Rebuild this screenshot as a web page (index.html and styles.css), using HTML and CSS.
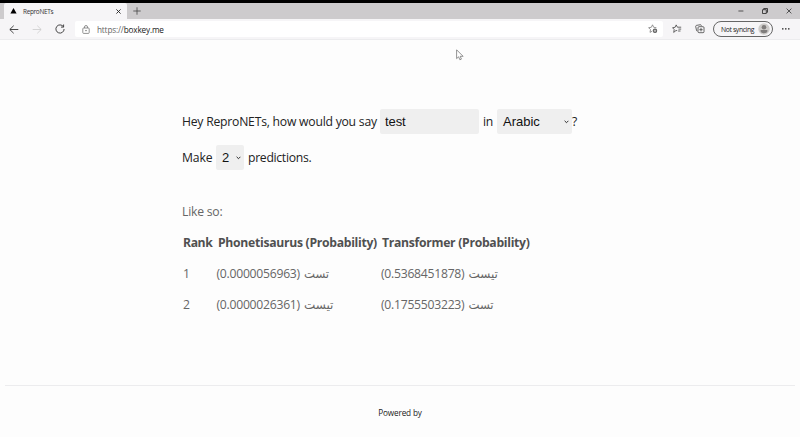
FILE: index.html
```html
<!DOCTYPE html>
<html lang="en">
<head>
<meta charset="utf-8">
<title>ReproNETs</title>
<link rel="stylesheet" href="styles.css">
</head>
<body>
<header class="browser">
  <div class="tabs">
    <div class="tab">
      <svg class="favicon" width="7" height="6" viewBox="0 0 7 6"><path d="M3.5 0 6.6 5.5H.4Z" fill="#000"/></svg>
      <span class="tab-title">ReproNETs</span>
      <svg class="tab-close" width="5" height="5" viewBox="0 0 5 5"><path d="m.4.4 4.2 4.2m0-4.2L.4 4.6" stroke="#222" stroke-width=".9"/></svg>
    </div>
    <svg class="new-tab" width="8" height="8" viewBox="0 0 8 8"><path d="M4 .3v7.4M.3 4h7.4" stroke="#444" stroke-width=".8"/></svg>
    <div class="window-controls">
      <svg width="6" height="6" viewBox="0 0 6 6"><path d="M.4 3h5" stroke="#333" stroke-width=".8"/></svg>
      <svg width="6" height="6" viewBox="0 0 6 6" fill="none" stroke="#222" stroke-width=".8"><path d="M.5 1.7h3.8v3.8H.5zM1.7 1.5V.5h3.8v3.8H4.5"/></svg>
      <svg width="6" height="6" viewBox="0 0 6 6"><path d="m.6.6 4.8 4.8m0-4.8L.6 5.4" stroke="#333" stroke-width=".8"/></svg>
    </div>
  </div>
  <nav class="toolbar">
    <svg class="back" width="10" height="9" viewBox="0 0 10 9" fill="none" stroke="#333" stroke-width=".9"><path d="M9.3 4.5H1M4.7.7.8 4.5l3.9 3.8"/></svg>
    <svg class="forward" width="10" height="9" viewBox="0 0 10 9" fill="none" stroke="#ccc" stroke-width=".8"><path d="M.7 4.5H9M5.3.7l3.9 3.8-3.9 3.8"/></svg>
    <svg class="reload" width="10" height="10" viewBox="0 0 10 10" fill="none" stroke="#333" stroke-width=".9"><path d="M8.4 2.7A4.1 4.1 0 1 0 9.1 5M8.6.5v2.6H6"/></svg>
    <div class="address">
      <svg class="lock" width="8" height="9" viewBox="0 0 8 9" fill="none" stroke="#777" stroke-width=".8"><rect x=".8" y="3" width="6.4" height="5.4" rx=".8"/><path d="M2.5 3V2a1.5 1.5 0 0 1 3 0v1"/><circle cx="4" cy="5.7" r=".4" fill="#777"/></svg>
      <span class="url"><span class="scheme">https://</span>boxkey.me</span>
      <svg class="star-add" width="10" height="10" viewBox="0 0 10 10" fill="none" stroke="#777" stroke-width=".75"><path d="M4.3 7.1 2 8.4l.5-2.8L.6 3.7l2.7-.4L4.5.8l1.2 2.5 2.7.4"/><circle cx="7" cy="6.8" r="2.2" fill="#555" stroke="none"/><path d="M7 5.5v2.6M5.7 6.8h2.6" stroke="#fff" stroke-width=".6"/></svg>
    </div>
    <svg class="favorites" width="10" height="10" viewBox="0 0 10 10" fill="none" stroke="#444" stroke-width=".8"><path d="M5.2 6.6 4 6.5 1.7 8.4l.5-2.8L.6 3.7l2.5-.4L4.2.9l1.2 2.3h3.8M6.4 5.1h2.8M6.1 7h2.4"/></svg>
    <svg class="collections" width="10" height="10" viewBox="0 0 10 10" fill="none" stroke="#444" stroke-width=".8"><path d="M2.4 7 1.6 6.7.7 2.5Q.7 1.6 1.5 1.4L5.4.7q.8 0 1 1.1"/><rect x="3" y="2.7" width="6" height="6" rx="1"/><path d="M6 4v3.4M4.3 5.7h3.4"/></svg>
    <div class="profile"><span>Not syncing</span><svg class="avatar" width="12" height="12" viewBox="0 0 12 12"><circle cx="6" cy="6" r="5.7" fill="#ceccca"/><circle cx="6" cy="4.2" r="2.3" fill="#807d7c"/><path d="M2.4 8q0-.9.9-.9h5.4q.9 0 .9.9Q9 10.3 6 10.3T2.4 8" fill="#807d7c"/></svg></div>
    <svg class="more" width="8" height="2" viewBox="0 0 8 2"><path d="M0 .3h1.5v1.2H0zm3 0h1.5v1.2H3zm3 0h1.5v1.2H6z" fill="#222"/></svg>
  </nav>
</header>
<main>
  <div class="line query"><span class="ask">Hey ReproNETs, how would you say</span><input class="word" type="text" value="test" aria-label="Word"><span class="in">in</span><div class="select language"><span>Arabic</span><svg width="5" height="4" viewBox="0 0 5 4"><path d="m.6.8 1.9 1.9L4.4.8" fill="none" stroke="#222" stroke-width=".95"/></svg></div><span>?</span></div>
  <div class="line count"><span class="make">Make</span><div class="select number"><span>2</span><svg width="5" height="4" viewBox="0 0 5 4"><path d="m.6.8 1.9 1.9L4.4.8" fill="none" stroke="#222" stroke-width=".95"/></svg></div><span class="predictions">predictions.</span></div>
  <section class="results">
    <p class="intro">Like so:</p>
    <div class="row head"><span>Rank</span><span class="h1">Phonetisaurus (Probability)</span><span class="h2">Transformer (Probability)</span></div>
    <div class="row"><span>1</span><span class="value"><span>(0.0000056963)</span><bdi lang="ar">تست</bdi></span><span class="value"><span>(0.5368451878)</span><bdi lang="ar" class="long">تيست</bdi></span></div>
    <div class="row"><span>2</span><span class="value"><span>(0.0000026361)</span><bdi lang="ar" class="long">تيست</bdi></span><span class="value"><span>(0.1755503223)</span><bdi lang="ar">تست</bdi></span></div>
  </section>
</main>
<footer>Powered by</footer>
<svg class="cursor" width="8" height="12" viewBox="0 0 8 12"><path d="M.6.8v8.8l2-1.8 1.3 3 1.5-.7-1.2-2.8h2.9Z" fill="#fff" stroke="#666" stroke-width=".7"/></svg>
</body>
</html>
```

FILE: styles.css
```css
* { box-sizing: border-box; }
body {
  margin: 0;
  width: 800px;
  height: 437px;
  overflow: hidden;
  display: flex;
  flex-direction: column;
  background: #fdfdfd;
  color: #222;
  font: 12.2px/16px "Open Sans", "Noto Sans", sans-serif;
  white-space: nowrap;
}
svg { display: block; flex: none; }
.browser { border-top: 3px solid #000; height: 40px; flex: none; }
.tabs { height: 16px; background: #cdcbcd; display: flex; align-items: center; padding-left: 4px; }
.tab { width: 123px; height: 16px; background: #f6f5f7; display: flex; align-items: center; padding: 0 6px; border-radius: 2px 2px 0 0; }
.tab-title { font-size: 6.4px; line-height: 10px; margin: 1px 0 0 6px; letter-spacing: -.3px; color: #333; }
.tab-close { margin: 1px 0 0 auto; }
.new-tab { margin-left: 6px; }
.window-controls { margin-left: auto; display: flex; gap: 18px; padding-right: 8px; }
.toolbar { height: 21px; background: #f6f5f7; border-bottom: 1px solid #ececee; display: flex; align-items: center; padding: 0 10px 0 9px; }
.forward { margin-left: 13px; }
.reload { margin-left: 13px; }
.address { width: 588px; height: 16px; background: #fff; border-radius: 2px; margin-left: 10px; padding: 0 5px 0 7px; display: flex; align-items: center; }
.url { margin: 1px 0 0 7px; font-size: 8.2px; line-height: 12px; letter-spacing: -.16px; }
.scheme { color: #666; }
.star-add { margin-left: auto; }
.favorites { margin-left: 9px; }
.collections { margin-left: 13px; }
.profile { width: 60px; height: 16px; margin-left: 8px; border: 1px solid #666; border-radius: 8px; display: flex; align-items: center; justify-content: space-between; padding: 0 2px 0 7px; font-size: 6.8px; line-height: 10px; letter-spacing: -.36px; }
.profile span { padding-top: 1px; }
.more { margin-left: auto; }

main { padding: 69px 0 0 182px; height: 345px; flex: none; letter-spacing: -.23px; }
.line { display: flex; align-items: center; height: 25px; }
.count { margin-top: 11px; }
.ask { width: 198px; }
.word, .select { background: #efefef; border: 0; border-radius: 2px; height: 25px; color: #111; font: 13px/25px "Liberation Sans", Arial, sans-serif; letter-spacing: -.1px; }
.word { width: 99px; padding: 0 5px; }
.in { width: 18px; padding-left: 4px; }
.select { display: flex; align-items: center; justify-content: space-between; }
.language { width: 75px; padding: 0 3px 0 6px; letter-spacing: 0; }
.make { width: 34px; letter-spacing: -.1px; }
.number { width: 28px; padding: 0 3px 0 6px; }
.predictions { margin-left: 4px; letter-spacing: -.3px; }

.results { color: #666; margin-top: 34px; }
.intro { margin: 0; }
.row { display: grid; grid-template-columns: 34px 164px 160px; height: 16px; margin-top: 15px; padding-left: 1px; }
.head { font-weight: 700; color: #505050; letter-spacing: -.29px; }
.head > :first-child { letter-spacing: -.4px; }
.h1, .h2 { padding-left: 1px; }
.value { display: flex; letter-spacing: -.26px; }
.value:nth-child(2) { margin-left: -.5px; }
bdi { margin-left: 4px; font: 11.7px/17px "DejaVu Sans", sans-serif; letter-spacing: 0; }
.long { font-size: 12px; }

footer { margin: 0 5px; border-top: 1px solid #ececee; padding-top: 19px; font-size: 8.2px; line-height: 16px; letter-spacing: -.15px; text-align: center; }
.cursor { position: absolute; left: 456px; top: 49px; }
```
